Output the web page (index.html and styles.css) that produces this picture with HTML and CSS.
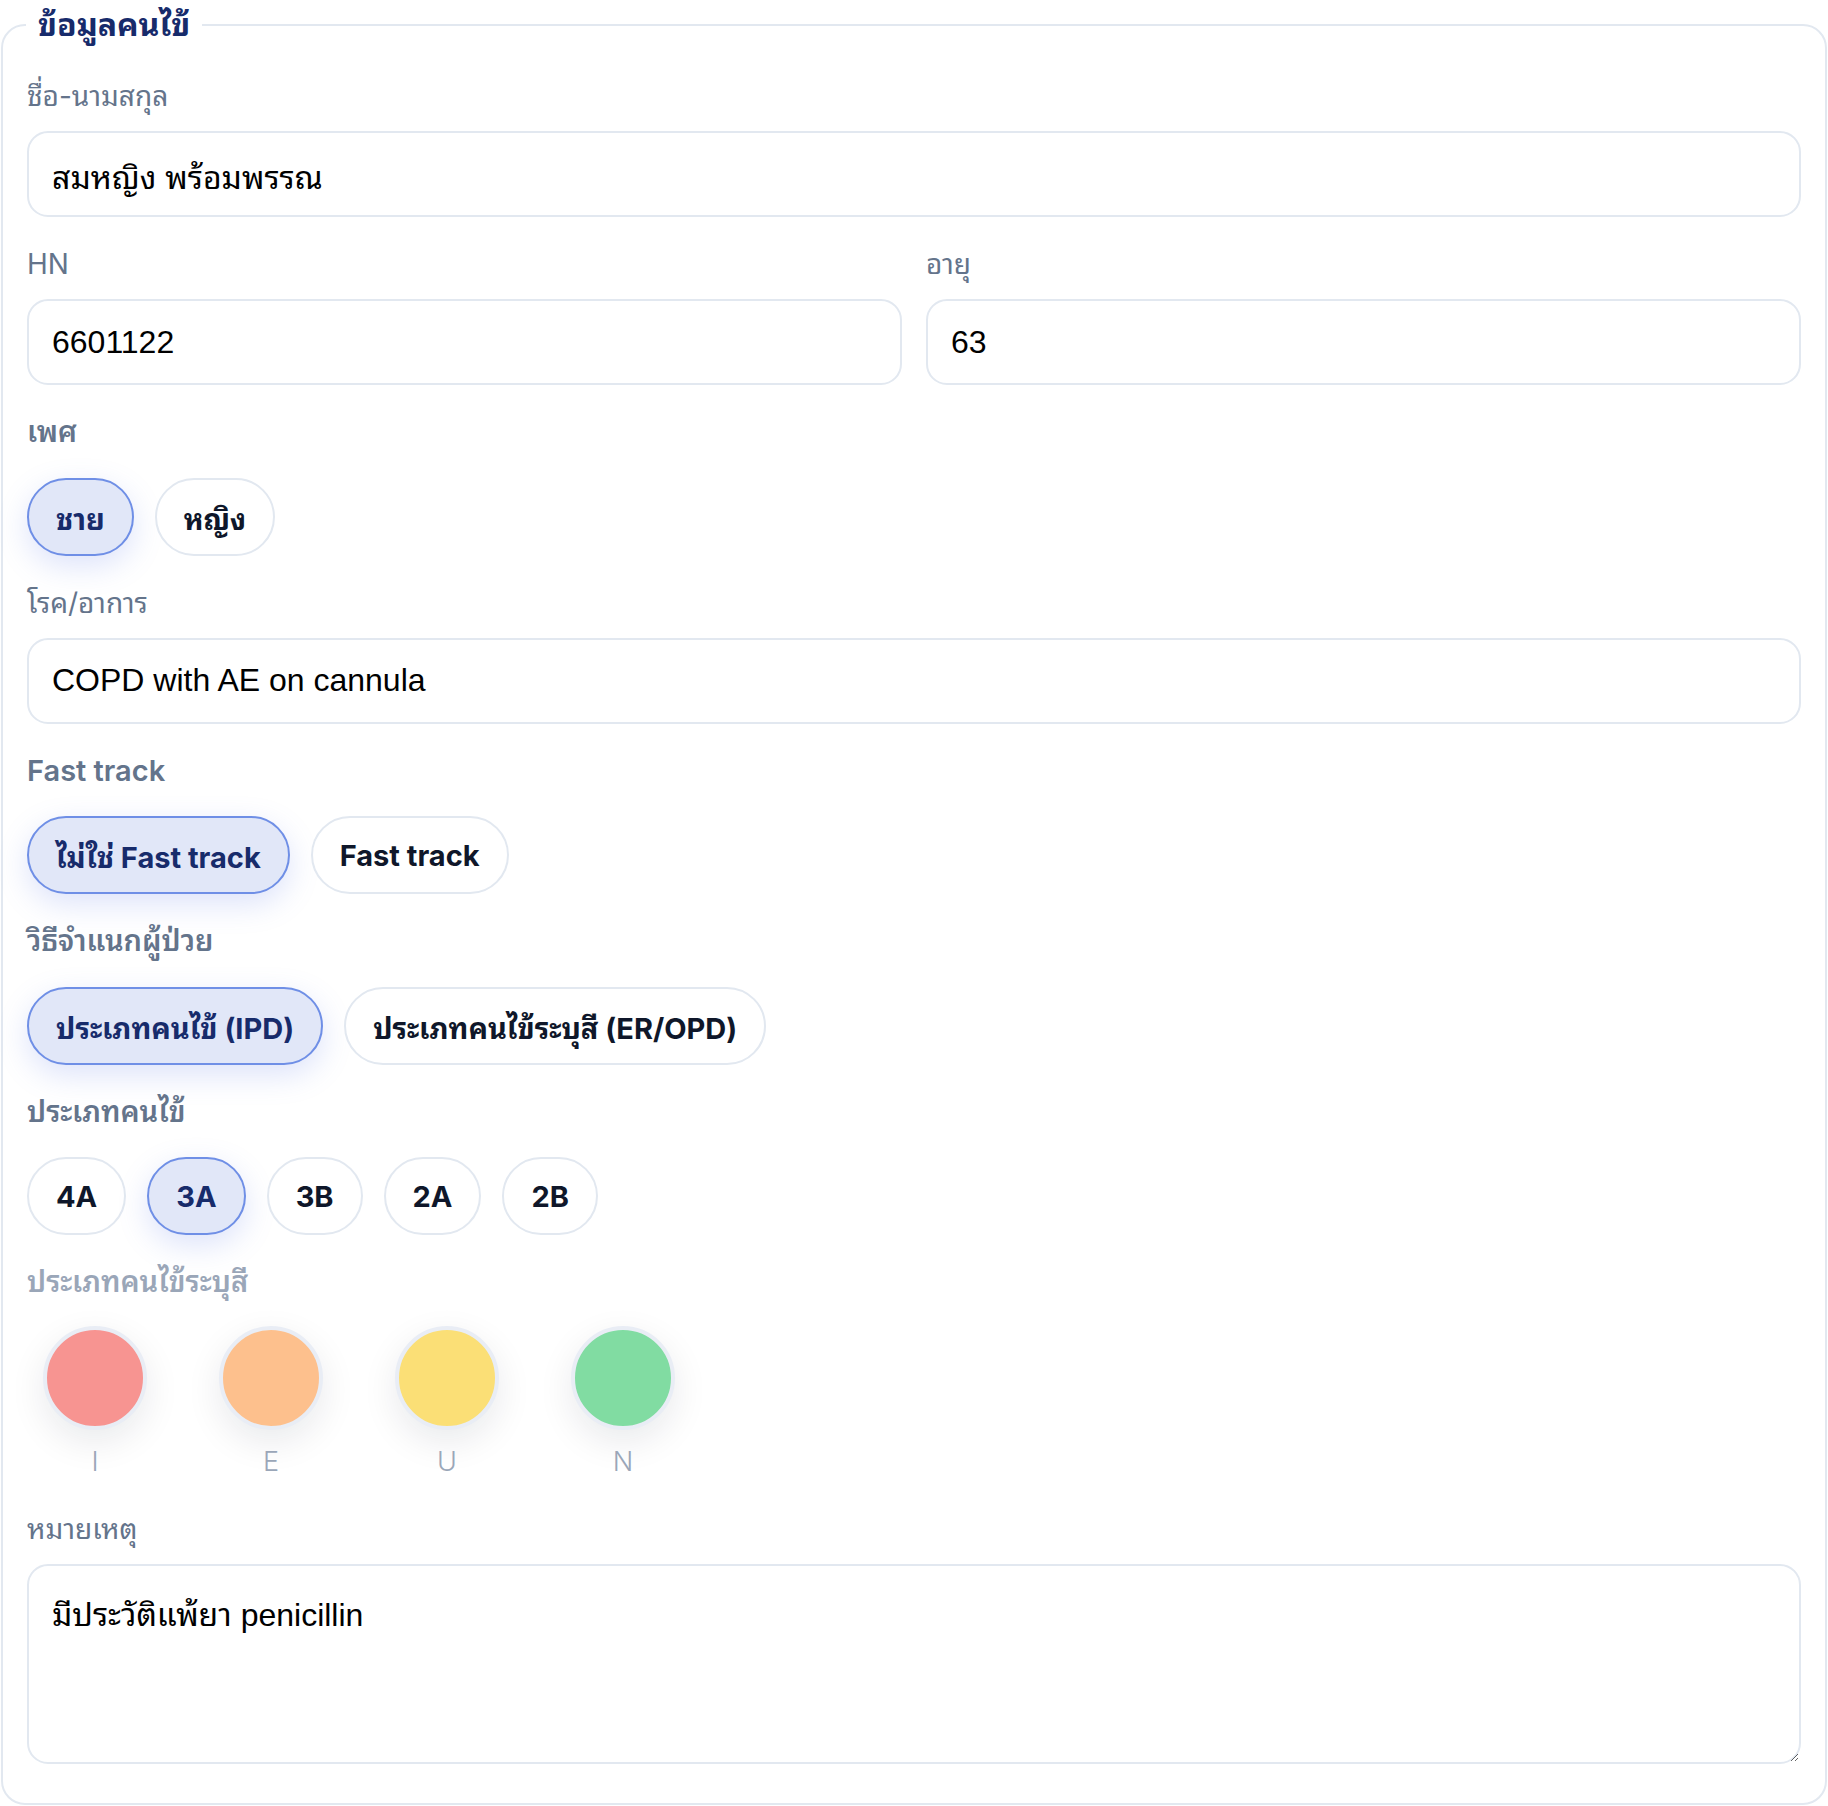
FILE: index.html
```html
<!DOCTYPE html>
<html lang="th">
<head>
  <meta charset="UTF-8">
  <meta name="viewport" content="width=device-width, initial-scale=1.0">
  <title>ข้อมูลคนไข้</title>
  <link rel="stylesheet" href="styles.css">
</head>
<body>
<form class="patient-form" onsubmit="return false;">
  <fieldset class="panel">
    <legend>ข้อมูลคนไข้</legend>

    <div class="field">
      <label class="field-label" for="fullname">ชื่อ-นามสกุล</label>
      <input class="text-input" id="fullname" type="text" value="สมหญิง พร้อมพรรณ">
    </div>

    <div class="field-row">
      <div class="field">
        <label class="field-label" for="hn">HN</label>
        <input class="text-input" id="hn" type="text" value="6601122">
      </div>
      <div class="field">
        <label class="field-label" for="age">อายุ</label>
        <input class="text-input" id="age" type="text" value="63">
      </div>
    </div>

    <div class="field">
      <span class="group-label">เพศ</span>
      <div class="chips">
        <button type="button" class="chip active">ชาย</button>
        <button type="button" class="chip">หญิง</button>
      </div>
    </div>

    <div class="field">
      <label class="field-label" for="diagnosis">โรค/อาการ</label>
      <input class="text-input" id="diagnosis" type="text" value="COPD with AE on cannula">
    </div>

    <div class="field">
      <span class="group-label">Fast track</span>
      <div class="chips">
        <button type="button" class="chip active">ไม่ใช่ Fast track</button>
        <button type="button" class="chip">Fast track</button>
      </div>
    </div>

    <div class="field">
      <span class="group-label">วิธีจำแนกผู้ป่วย</span>
      <div class="chips">
        <button type="button" class="chip active">ประเภทคนไข้ (IPD)</button>
        <button type="button" class="chip">ประเภทคนไข้ระบุสี (ER/OPD)</button>
      </div>
    </div>

    <div class="field">
      <span class="group-label">ประเภทคนไข้</span>
      <div class="chips">
        <button type="button" class="chip">4A</button>
        <button type="button" class="chip active">3A</button>
        <button type="button" class="chip">3B</button>
        <button type="button" class="chip">2A</button>
        <button type="button" class="chip">2B</button>
      </div>
    </div>

    <div class="field">
      <span class="group-label disabled">ประเภทคนไข้ระบุสี</span>
      <div class="colors">
        <button type="button" class="color-opt" disabled><span class="dot red"></span><span class="dot-name">I</span></button>
        <button type="button" class="color-opt" disabled><span class="dot orange"></span><span class="dot-name">E</span></button>
        <button type="button" class="color-opt" disabled><span class="dot yellow"></span><span class="dot-name">U</span></button>
        <button type="button" class="color-opt" disabled><span class="dot green"></span><span class="dot-name">N</span></button>
      </div>
    </div>

    <div class="field last">
      <label class="field-label" for="note">หมายเหตุ</label>
      <textarea class="text-input note" id="note">มีประวัติแพ้ยา penicillin</textarea>
    </div>
  </fieldset>
</form>
</body>
</html>
```

FILE: styles.css
```css
body {
    margin: 0;
    padding: 0;
    background: #fff;
    font-family: 'Inter', 'Noto Sans Thai Looped', 'Noto Looped Thai', 'Loma', 'Garuda', 'Waree', 'Noto Sans Thai', 'Noto Sans', sans-serif;
    color: #0f172a;
}

.patient-form {
    margin: 0;
}

.panel {
    margin: 4px 1px 1px 1px;
    padding: 31px 24px 39px 24px;
    border: 2px solid #e2e8f0;
    border-radius: 24px;
    min-width: 0;
}

.panel legend {
    height: 42px;
    padding: 0 12px;
    margin-left: -1px;
    font-size: 32px;
    line-height: 42px;
    font-weight: 700;
    color: #172b6b;
}

.field {
    display: flex;
    flex-direction: column;
    margin-bottom: 28px;
}

.field.last {
    margin-bottom: 0;
}

.field-row {
    display: grid;
    grid-template-columns: 1fr 1fr;
    gap: 24px;
}

.field-label,
.group-label {
    display: block;
    height: 38px;
    font-size: 28px;
    line-height: 38px;
    color: #64748b;
    margin-bottom: 16px;
    white-space: nowrap;
}

.group-label {
    font-size: 29px;
    font-weight: 600;
    margin-bottom: 26.5px;
}

.group-label.disabled {
    color: #9aa6b8;
    margin-bottom: 24.5px;
}

.text-input {
    box-sizing: border-box;
    width: 100%;
    height: 86px;
    padding: 0 23px;
    border: 2px solid #e2e8f0;
    border-radius: 21px;
    background: #fff;
    font-family: 'Liberation Sans', 'Noto Sans Thai Looped', 'Loma', 'Garuda', 'Noto Sans Thai', sans-serif;
    font-size: 32px;
    color: #000;
    outline: none;
}

.note {
    height: 200px;
    padding: 27px 23px;
    line-height: 1.4;
    resize: vertical;
}

.chips {
    display: flex;
    gap: 21px;
}

.chip {
    box-sizing: border-box;
    height: 78px;
    padding: 0 27px;
    border: 2px solid #e2e8f0;
    border-radius: 999px;
    background: #fff;
    font-family: inherit;
    font-size: 29px;
    font-weight: 700;
    color: #0f172a;
    cursor: pointer;
}

.chip.active {
    background: #e1e7f8;
    border-color: #6f8fe6;
    color: #172b6b;
    box-shadow: 0 10px 30px rgba(99, 126, 234, 0.22);
}

.colors {
    display: flex;
    gap: 40px;
    margin-bottom: 2px;
}

.color-opt {
    width: 136px;
    padding: 0;
    border: none;
    background: none;
    display: flex;
    flex-direction: column;
    align-items: center;
    gap: 14px;
    font-family: inherit;
}

.dot {
    box-sizing: border-box;
    width: 104px;
    height: 104px;
    border-radius: 50%;
    border: 4px solid #e9edf5;
    box-shadow: 0 12px 36px rgba(15, 23, 42, 0.09);
}

.dot.red { background: #f79491; }
.dot.orange { background: #fdc08d; }
.dot.yellow { background: #fbdf76; }
.dot.green { background: #81dca2; }

.dot-name {
    display: block;
    height: 36px;
    font-size: 27px;
    line-height: 36px;
    font-weight: 300;
    color: #9aa6b8;
}
```
